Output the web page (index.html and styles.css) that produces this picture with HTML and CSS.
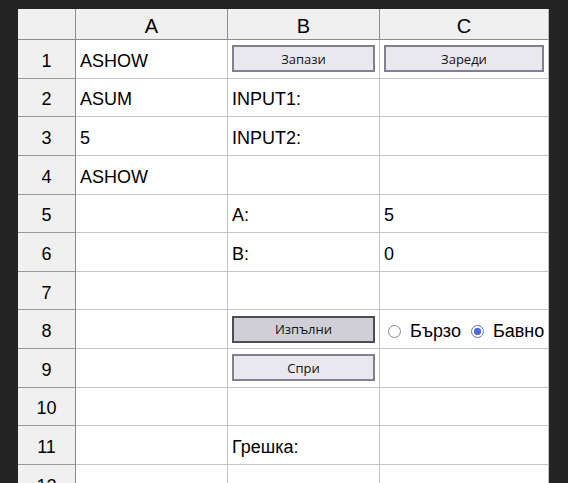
FILE: index.html
```html
<!DOCTYPE html>
<html lang="bg">
<head>
<meta charset="utf-8">
<title>Sheet</title>
<link rel="stylesheet" href="styles.css">
</head>
<body>
<div class="sheet">
  <div class="hd corner"></div>
  <div class="hd col">A</div>
  <div class="hd col">B</div>
  <div class="hd col">C</div>

  <div class="hd row">1</div>
  <div class="cell">ASHOW</div>
  <div class="cell btncell"><button class="btn">Запази</button></div>
  <div class="cell btncell"><button class="btn">Зареди</button></div>

  <div class="hd row">2</div>
  <div class="cell">ASUM</div>
  <div class="cell">INPUT1:</div>
  <div class="cell"></div>

  <div class="hd row">3</div>
  <div class="cell">5</div>
  <div class="cell">INPUT2:</div>
  <div class="cell"></div>

  <div class="hd row">4</div>
  <div class="cell">ASHOW</div>
  <div class="cell"></div>
  <div class="cell"></div>

  <div class="hd row">5</div>
  <div class="cell"></div>
  <div class="cell">A:</div>
  <div class="cell">5</div>

  <div class="hd row">6</div>
  <div class="cell"></div>
  <div class="cell">B:</div>
  <div class="cell">0</div>

  <div class="hd row">7</div>
  <div class="cell"></div>
  <div class="cell"></div>
  <div class="cell"></div>

  <div class="hd row">8</div>
  <div class="cell"></div>
  <div class="cell btncell"><button class="btn btn-active">Изпълни</button></div>
  <div class="cell radios">
    <label class="radio"><input type="radio" name="speed"> Бързо</label>
    <label class="radio"><input type="radio" name="speed" checked> Бавно</label>
  </div>

  <div class="hd row">9</div>
  <div class="cell"></div>
  <div class="cell btncell"><button class="btn">Спри</button></div>
  <div class="cell"></div>

  <div class="hd row">10</div>
  <div class="cell"></div>
  <div class="cell"></div>
  <div class="cell"></div>

  <div class="hd row">11</div>
  <div class="cell"></div>
  <div class="cell">Грешка:</div>
  <div class="cell"></div>

  <div class="hd row">12</div>
  <div class="cell"></div>
  <div class="cell"></div>
  <div class="cell"></div>

  <div class="hd row">13</div>
  <div class="cell"></div>
  <div class="cell"></div>
  <div class="cell"></div>
</div>
</body>
</html>
```
FILE: styles.css
```css
html, body {
  margin: 0;
  padding: 0;
  background: #242424;
}
body {
  padding: 9px 0 0 18px;
  font-family: "Liberation Sans", Arial, sans-serif;
  color: #000;
}
.sheet {
  display: grid;
  grid-template-columns: 58px 152px 152px 169px;
  grid-template-rows: 31px;
  grid-auto-rows: 38.64px;
  width: 531px;
  background: #fff;
}
.sheet > div {
  box-sizing: border-box;
  min-width: 0;
}
.hd {
  background: #f0f0f0;
  border-right: 1px solid #8c8c8c;
  border-bottom: 1px solid #8c8c8c;
  display: flex;
  align-items: center;
  justify-content: center;
  padding-top: 5px;
}
.col {
  font-size: 20px;
}
.sheet > .hd.col:nth-child(4) {
  border-right-color: #b8b8b8;
}
.row {
  font-size: 18px;
  border-bottom-color: #999;
}
.cell {
  border-right: 1px solid #c4c4c4;
  border-bottom: 1px solid #c4c4c4;
  display: flex;
  align-items: center;
  padding: 5px 4px 0;
  font-size: 18px;
  white-space: nowrap;
  overflow: hidden;
}
.cell.btncell {
  padding-top: 0;
}
.btn {
  box-sizing: border-box;
  width: 100%;
  height: 27px;
  margin: 0;
  padding: 0;
  background: #e9e8ee;
  border: 2px solid #80808e;
  border-radius: 0;
  font-family: "Open Sans", "Noto Sans", sans-serif;
  font-size: 13px;
  color: #111;
}
.btn-active {
  background: #cfcfd5;
  border-color: #4c4c54;
}
.radios {
  gap: 10px;
  padding-left: 8px;
}
.radio {
  display: flex;
  align-items: center;
  gap: 9px;
}
.radio input {
  appearance: none;
  -webkit-appearance: none;
  box-sizing: border-box;
  width: 13px;
  height: 13px;
  margin: 0;
  border: 1px solid #8a8a8a;
  border-radius: 50%;
  background: #fff;
}
.radio input:checked {
  border-color: #5a76d6;
  background: radial-gradient(circle, #4c6dd8 0 3.4px, #fff 4px);
}
```
